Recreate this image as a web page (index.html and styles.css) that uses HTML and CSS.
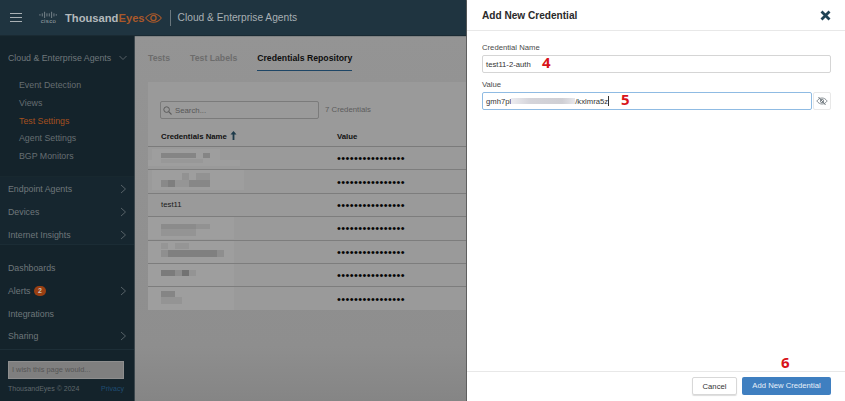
FILE: index.html
```html
<!DOCTYPE html>
<html lang="en">
<head>
<meta charset="utf-8">
<title>Add New Credential</title>
<link rel="stylesheet" href="styles.css">
</head>
<body>
<div class="screen">
  <div class="app">
    <header class="topbar">
      <div class="burger"><i></i><i></i><i></i></div>
      <div class="cisco">
        <svg class="cisco-bars" width="24" height="9" viewBox="0 0 24 9"><path d="M1 4v2M4 3v4M7 1v8M10 3v4M13 3v4M16 1v8M19 3v4M22 4v2" stroke="#8d979d" stroke-width="1" fill="none"/></svg>
        <span class="cisco-word">cisco</span>
      </div>
      <div class="brand"><span class="brand-a">Thousand</span><span class="brand-b">Eyes</span>
        <svg class="eye" width="17" height="10" viewBox="0 0 17 10"><path d="M.7 5C3 2 5.600.7 8.500.7S14 2 16.300 5C14 8 11.400 9.300 8.500 9.300S3 8 .7 5Z" fill="none" stroke="#a9582a" stroke-width="1.100"/><circle cx="8.500" cy="5" r="2.600" fill="none" stroke="#a9582a" stroke-width="1.300"/></svg>
      </div>
      <div class="top-divider"></div>
      <div class="top-title">Cloud &amp; Enterprise Agents</div>
    </header>
    <div class="below">
      <nav class="sidebar">
        <div class="nav-group first">
          <div class="nav-item"><span>Cloud &amp; Enterprise Agents</span><svg class="chev" width="8" height="8" viewBox="0 0 8 8"><path d="M.5 2 4 5.500 7.500 2" fill="none" stroke="#566167" stroke-width="1"/></svg></div>
          <div class="sub">Event Detection</div>
          <div class="sub">Views</div>
          <div class="sub active">Test Settings</div>
          <div class="sub">Agent Settings</div>
          <div class="sub">BGP Monitors</div>
        </div>
        <div class="nav-group mid">
          <div class="nav-item"><span>Endpoint Agents</span><svg class="chev" width="8" height="10" viewBox="0 0 8 10"><path d="M2 1 6.500 5 2 9" fill="none" stroke="#566167" stroke-width="1"/></svg></div>
          <div class="nav-item"><span>Devices</span><svg class="chev" width="8" height="10" viewBox="0 0 8 10"><path d="M2 1 6.500 5 2 9" fill="none" stroke="#566167" stroke-width="1"/></svg></div>
          <div class="nav-item"><span>Internet Insights</span><svg class="chev" width="8" height="10" viewBox="0 0 8 10"><path d="M2 1 6.500 5 2 9" fill="none" stroke="#566167" stroke-width="1"/></svg></div>
        </div>
        <div class="nav-group last">
          <div class="nav-item"><span>Dashboards</span></div>
          <div class="nav-item"><span>Alerts <b class="badge">2</b></span><svg class="chev" width="8" height="10" viewBox="0 0 8 10"><path d="M2 1 6.500 5 2 9" fill="none" stroke="#566167" stroke-width="1"/></svg></div>
          <div class="nav-item"><span>Integrations</span></div>
          <div class="nav-item"><span>Sharing</span><svg class="chev" width="8" height="10" viewBox="0 0 8 10"><path d="M2 1 6.500 5 2 9" fill="none" stroke="#566167" stroke-width="1"/></svg></div>
        </div>
        <div class="side-foot">
          <div class="wish">I wish this page would...</div>
          <div class="copy"><span>ThousandEyes © 2024</span><span class="privacy">Privacy</span></div>
        </div>
      </nav>
      <main class="content">
        <div class="tabs">
          <span class="tab">Tests</span>
          <span class="tab">Test Labels</span>
          <span class="tab current">Credentials Repository</span>
        </div>
        <section class="panel">
          <div class="tools">
            <div class="search">
              <svg width="9" height="9" viewBox="0 0 9 9"><circle cx="3.600" cy="3.600" r="2.800" fill="none" stroke="#5c5c5c" stroke-width="1"/><path d="M5.700 5.700 8.500 8.500" stroke="#5c5c5c" stroke-width="1.100"/></svg>
              <span>Search...</span>
            </div>
            <span class="count">7 Credentials</span>
          </div>
          <div class="row head">
            <span class="name">Credentials Name <svg class="sort" width="7" height="9" viewBox="0 0 7 9"><path d="M3.500 0 6.500 3.500H4.400V9H2.600V3.500H.5Z" fill="#1d3a4a"/></svg></span>
            <span class="value">Value</span>
          </div>
          <div class="row"><span class="name"></span><span class="value dots">••••••••••••••••</span></div>
          <div class="row"><span class="name"></span><span class="value dots">••••••••••••••••</span></div>
          <div class="row"><span class="name">test11</span><span class="value dots">••••••••••••••••</span></div>
          <div class="row"><span class="name"></span><span class="value dots">••••••••••••••••</span></div>
          <div class="row"><span class="name"></span><span class="value dots">••••••••••••••••</span></div>
          <div class="row"><span class="name"></span><span class="value dots">••••••••••••••••</span></div>
          <div class="row"><span class="name"></span><span class="value dots">••••••••••••••••</span></div>
          <svg class="mosaic" width="96" height="166" viewBox="0 0 96 166">
            <g fill="#9e9e9e">
              <rect x="4" y="3" width="68" height="15"/><rect x="0" y="14" width="92" height="6"/>
              <rect x="4" y="24" width="92" height="20"/><rect x="0" y="71" width="86" height="22"/>
              <rect x="0" y="95" width="86" height="22"/><rect x="0" y="118" width="86" height="22"/><rect x="0" y="141" width="86" height="23"/>
            </g>
            <g>
              <rect x="13" y="7" width="35" height="5" fill="#858585"/><rect x="55" y="7" width="7" height="5" fill="#858585"/><rect x="13" y="13" width="42" height="4" fill="#989898"/>
              <rect x="34" y="27" width="7" height="7" fill="#929292"/><rect x="48" y="27" width="14" height="7" fill="#929292"/>
              <rect x="13" y="34" width="7" height="7" fill="#898989"/><rect x="20" y="34" width="7" height="7" fill="#7e7e7e"/><rect x="27" y="34" width="14" height="7" fill="#959595"/><rect x="41" y="34" width="21" height="7" fill="#878787"/>
              <rect x="13" y="78" width="35" height="5" fill="#8b8b8b"/><rect x="48" y="78" width="14" height="5" fill="#929292"/><rect x="13" y="83" width="35" height="7" fill="#949494"/>
              <rect x="13" y="97" width="7" height="6" fill="#959595"/><rect x="27" y="97" width="14" height="6" fill="#959595"/><rect x="13" y="104" width="7" height="7" fill="#8f8f8f"/><rect x="20" y="104" width="49" height="7" fill="#808080"/><rect x="69" y="104" width="7" height="7" fill="#8e8e8e"/>
              <rect x="13" y="124" width="14" height="6" fill="#7b7b7b"/><rect x="27" y="124" width="7" height="6" fill="#8d8d8d"/><rect x="34" y="124" width="7" height="6" fill="#727272"/><rect x="41" y="124" width="7" height="6" fill="#949494"/>
              <rect x="13" y="145" width="14" height="6" fill="#858585"/><rect x="13" y="151" width="21" height="7" fill="#949494"/>
            </g>
          </svg>
        </section>
      </main>
    </div>
  </div>
  <aside class="drawer">
    <div class="drawer-head">
      <h1>Add New Credential</h1>
      <svg class="close" width="11" height="11" viewBox="0 0 11 11"><path d="M1.500 1.500 9.500 9.500M9.500 1.500 1.500 9.500" stroke="#1f4254" stroke-width="2.800" fill="none"/></svg>
    </div>
    <div class="drawer-body">
      <label class="lbl">Credential Name</label>
      <div class="input"><span>test11-2-auth</span><b class="step step-4">4</b></div>
      <label class="lbl">Value</label>
      <div class="value-line">
        <div class="input focus"><span>gmh7pl</span><i class="smudge"></i><span>/kxlmra5z</span><i class="caret"></i><b class="step step-5">5</b></div>
        <div class="eye-btn"><svg width="12" height="10" viewBox="0 0 12 10"><path d="M.8 5C2.300 3 4 2 6 2s3.700 1 5.200 3C9.700 7 8 8 6 8S2.300 7 .8 5Z" fill="none" stroke="#7d858a" stroke-width=".9"/><circle cx="6" cy="5" r="1.700" fill="none" stroke="#7d858a" stroke-width=".9"/><path d="M2.500 1 9.500 9" stroke="#6b747a" stroke-width="1"/></svg></div>
      </div>
      <b class="step step-6">6</b>
    </div>
    <div class="drawer-foot">
      <span class="btn cancel">Cancel</span>
      <span class="btn primary">Add New Credential</span>
    </div>
  </aside>
</div>
</body>
</html>
```
FILE: styles.css
```css
* { box-sizing: border-box; }
html, body { margin: 0; padding: 0; }
body { font-family: "Liberation Sans", Arial, sans-serif; background: #8f8f8f; }
.screen { width: 845px; height: 401px; display: flex; overflow: hidden; }

.app { width: 467px; height: 401px; display: flex; flex-direction: column; border-right: 1px solid #5f5f5f; }
.topbar { height: 35px; flex: none; background: #1f3440; display: flex; align-items: center; padding-left: 10px; color: #a7afb3; box-shadow: 0 1px 1px #1a2a33; position: relative; }
.burger { width: 12px; display: flex; flex-direction: column; gap: 2.500px; }
.burger i { display: block; height: 1.500px; background: #a9b0b4; }
.cisco { width: 21px; margin-left: 16px; display: flex; flex-direction: column; align-items: center; }
.cisco-bars { width: 21px; height: 7px; }
.cisco-word { font-size: 6px; line-height: 6px; letter-spacing: .4px; color: #9aa3a8; }
.brand { margin-left: 6px; display: flex; align-items: center; font-size: 11.200px; font-weight: 700; }
.brand-a { color: #b3b9bc; }
.brand-b { color: #a9582a; }
.eye { margin-left: 0; }
.top-divider { width: 1px; height: 16px; background: #69767d; margin-left: 8px; }
.top-title { margin-left: 7px; font-size: 10.200px; color: #a7afb3; }

.below { flex: 1; display: flex; min-height: 0; }
.sidebar { width: 135px; flex: none; background: #14232b; color: #6d7579; font-size: 8.800px; display: flex; flex-direction: column; border-right: 1px solid #3c474d; }
.nav-group { padding: 0 8px; }
.first { padding-top: 12px; height: 141px; background: #14232b; }
.mid { padding-top: 1px; height: 69px; background: #16262f; border-top: 1px solid #18282f; border-bottom: 1px solid #1b2c35; }
.last { padding-top: 12px; height: 105px; border-bottom: 1px solid #1d2e37; }
.nav-item { height: 22.700px; display: flex; align-items: center; justify-content: space-between; color: #6f777b; }
.first .nav-item { height: 22px; margin-bottom: 8px; }
.chev { flex: none; margin-right: -1px; }
.sub { height: 17.800px; line-height: 17.800px; padding-left: 11px; color: #666e72; }
.sub.active { color: #a4501f; }
.badge { display: inline-block; width: 12px; height: 10px; line-height: 10px; border-radius: 5px; background: #9a3f12; color: #c9c2bd; font-size: 7px; text-align: center; vertical-align: 1px; margin-left: 1px; }
.side-foot { padding: 11px 8px 0; }
.wish { width: 116px; height: 18px; background: #7f7f7f; border: 1px solid #8e8e8e; color: #565656; font-size: 7.400px; line-height: 16px; padding-left: 3px; }
.copy { display: flex; justify-content: space-between; width: 116px; margin-top: 6px; font-size: 7px; color: #5f686c; }
.privacy { color: #1f4d73; }

.content { flex: 1; min-width: 0; background: linear-gradient(#949494, #8e8e8e 85%, #858585); padding: 0 0 0 13px; }
.tabs { display: flex; gap: 20px; height: 47px; padding-top: 18px; font-size: 8.700px; font-weight: 700; color: #6c6c6c; }
.tabs .tab { height: 18px; }
.tab.current { color: #0e0e0e; border-bottom: 1.500px solid #1e4666; }
.panel { height: 228px; background: #9a9a9a; position: relative; }
.tools { height: 46px; padding: 19px 0 0 12px; display: flex; align-items: flex-start; }
.search { width: 159px; height: 18px; border: 1px solid #7b7b7b; border-radius: 2px; display: flex; align-items: center; gap: 3px; padding-left: 2px; color: #585858; font-size: 7.800px; }
.count { margin-left: 6px; font-size: 7.800px; line-height: 18px; color: #5c5c5c; }
.row { height: 23.400px; display: flex; align-items: center; padding-left: 13px; border-bottom: 1px solid #7d7d7d; font-size: 7.800px; color: #1a1a1a; }
.row:last-of-type { border-bottom: 0; }
.row.head { height: 19px; padding-bottom: 2px; font-weight: 700; border-bottom: 1.500px solid #7b7b7b; color: #111; }
.name { width: 176px; }
.sort { vertical-align: -1px; margin-left: 1px; }
.value { flex: none; }
.dots { font-size: 11px; letter-spacing: .4px; color: #050505; }
.mosaic { position: absolute; left: 0; top: 64px; }

.drawer { flex: 1; display: flex; flex-direction: column; background: #fff; color: #333; }
.drawer-head { height: 31px; flex: none; border-bottom: 1px solid #e8e8e8; display: flex; align-items: center; justify-content: space-between; padding: 0 14px 0 15px; }
h1 { margin: 0; font-size: 10.100px; font-weight: 700; color: #2a2a2a; }
.drawer-body { flex: 1; padding: 12px 14px 0 15px; position: relative; }
.lbl { display: block; font-size: 7.700px; line-height: 10px; color: #4a4a4a; }
.lbl + .input { margin-top: 2px; margin-bottom: 7px; }
.input { height: 18px; flex: 1; border: 1px solid #d5d5d5; border-radius: 2px; padding-left: 3px; display: flex; align-items: center; font-size: 7.700px; color: #333; position: relative; }
.value-line { display: flex; margin-top: 2px; gap: 1px; }
.input.focus { border-color: #8fbbe3; }
.smudge { width: 64px; height: 6px; background: linear-gradient(90deg, #ececf0, #d4d4da 30%, #cfcfd4 80%, #e6e6ea); }
.caret { width: 1px; height: 10px; background: #333; }
.eye-btn { width: 18px; height: 18px; border: 1px solid #e8e8e8; border-radius: 2px; display: flex; align-items: center; justify-content: center; }
.step { color: #d8141a; font-family: "Open Sans", sans-serif; font-weight: 700; font-size: 15px; line-height: 18px; position: absolute; }
.step-4 { left: 59px; top: -3px; }
.step-5 { left: 138px; top: -3px; }
.step-6 { left: 314px; top: 322px; }
.drawer-foot { height: 30px; flex: none; border-top: 1px solid #e8e8e8; display: flex; justify-content: flex-end; align-items: center; gap: 5px; padding-right: 14px; padding-bottom: 1px; font-size: 7.700px; }
.btn { height: 18px; line-height: 17px; text-align: center; border-radius: 2px; }
.cancel { width: 45px; border: 1px solid #d8d8d8; color: #333; box-shadow: 0 1px 1px #ddd; }
.primary { width: 89px; background: #3f7fc0; color: #e8f0f8; }
```
